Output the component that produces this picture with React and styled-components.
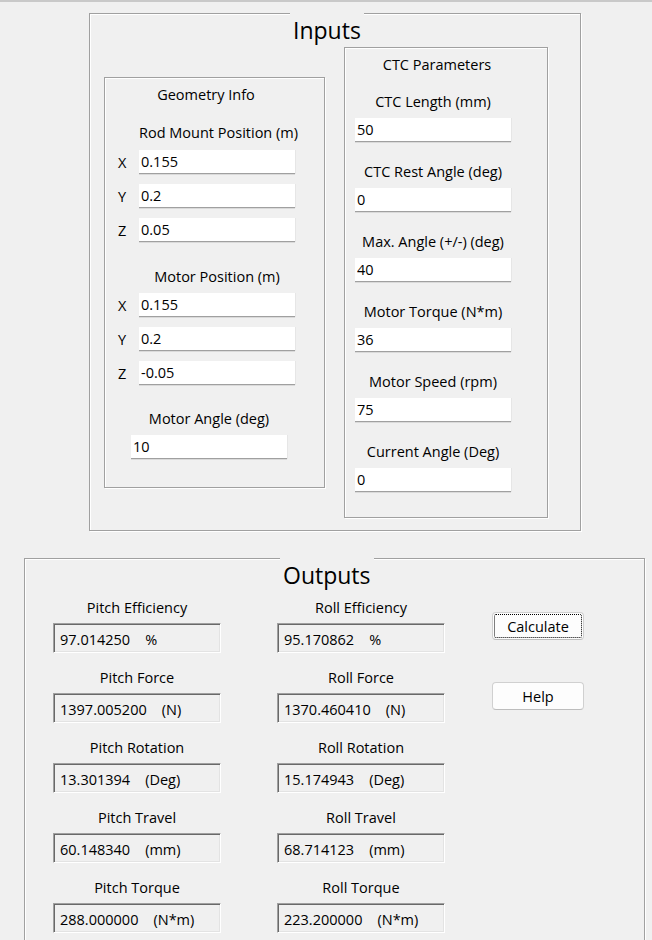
import styled, { createGlobalStyle } from 'styled-components';

const GlobalStyle = createGlobalStyle`
  html, body {
    margin: 0;
    padding: 0;
    background: #f0f0f0;
    overflow: hidden;
  }
  body {
    font-family: "Segoe UI", "Open Sans", "Noto Sans", sans-serif;
    font-size: 14.5px;
    color: #000;
  }
  * { box-sizing: border-box; }
`;

const Window = styled.div`
  border-top: 2px solid #c9c9c9;
  padding: 11px 0 0 24px;
  height: 940px;
  display: flex;
  flex-direction: column;
  align-items: flex-start;
`;

// etched frame like a WinForms GroupBox
const Group = styled.div`
  position: relative;
  flex-shrink: 0;
  border: 1px solid #a0a0a0;
  box-shadow: inset 1px 1px 0 #fff, 1px 1px 0 #fff;
`;

const InputsGroup = styled(Group)`
  margin-left: 65px;
  width: 492px;
  height: 518px;
  padding: 33px 0 0 14px;
  display: flex;
  align-items: flex-start;
  gap: 19px;
`;

const OutputsGroup = styled(Group)`
  margin-top: 27px;
  width: 621px;
  height: 420px;
  padding: 39px 0 0 28px;
  display: flex;
  align-items: flex-start;
`;

const GroupTitle = styled.div`
  position: absolute;
  top: -1px;
  left: ${p => p.left}px;
  padding: 0 3px;
  background: #f0f0f0;
  font-size: 23px;
  line-height: 34px;
`;

const SubGroup = styled(Group)`
  width: ${p => p.w}px;
  margin-top: ${p => p.top || 0}px;
  padding: 7px 0 ${p => p.bottom}px 0;
  display: flex;
  flex-direction: column;
  align-items: flex-start;
`;

const Caption = styled.div`
  width: 156px;
  line-height: 20px;
  text-align: center;
  white-space: nowrap;
  margin-left: ${p => p.indent || 0}px;
  margin-top: ${p => p.gap || 0}px;
`;

const TextBox = styled.input`
  width: 156px;
  height: 24px;
  margin: ${p => p.gap || 0}px 0 0 ${p => p.indent || 0}px;
  padding: 0 2px;
  border: none;
  border-bottom: 1px solid #a0a0a0;
  box-shadow: 0 1px 0 #dadada, 1px 0 0 #e6e6e6;
  background: #fff;
  font: inherit;
  color: #000;
  outline: none;
`;

const AxisRow = styled.div`
  display: flex;
  align-items: center;
  margin-top: ${p => p.gap}px;
`;

const Axis = styled.span`
  width: 34px;
  padding-left: 13px;
`;

const OutColumn = styled.div`
  width: 168px;
  margin-right: ${p => p.after}px;
  display: flex;
  flex-direction: column;
`;

const OutLabel = styled.div`
  line-height: 20px;
  text-align: center;
  margin-top: ${p => (p.first ? 0 : 15)}px;
`;

const ReadOut = styled.div`
  margin-top: 5px;
  height: 30px;
  padding: 2px 0 0 6px;
  display: flex;
  align-items: center;
  border-top: 1px solid #a0a0a0;
  border-left: 1px solid #a0a0a0;
  border-right: 1px solid #fff;
  border-bottom: 1px solid #fff;
  box-shadow: inset 1px 1px 0 #696969, inset -1px -1px 0 #e3e3e3;
  white-space: nowrap;
`;

const Unit = styled.span`
  margin-left: 15px;
`;

const ButtonColumn = styled.div`
  padding-top: 14px;
  display: flex;
  flex-direction: column;
  gap: 42px;
`;

const Button = styled.button`
  position: relative;
  width: 92px;
  height: 28px;
  border: 1px solid #d0d0d0;
  border-bottom-color: #bdbdbd;
  border-radius: 4px;
  background: #fdfdfd;
  font: inherit;
  color: #000;
  padding: 0;
  outline: ${p => (p.focused ? '1px dotted #000' : 'none')};
  outline-offset: -3px;
`;

const geoRows = [
  { axis: 'X', value: '0.155' },
  { axis: 'Y', value: '0.2' },
  { axis: 'Z', value: '0.05' },
];

const motorRows = [
  { axis: 'X', value: '0.155' },
  { axis: 'Y', value: '0.2' },
  { axis: 'Z', value: '-0.05' },
];

const ctcFields = [
  ['CTC Length (mm)', '50'],
  ['CTC Rest Angle (deg)', '0'],
  ['Max. Angle (+/-) (deg)', '40'],
  ['Motor Torque (N*m)', '36'],
  ['Motor Speed (rpm)', '75'],
  ['Current Angle (Deg)', '0'],
];

const pitch = [
  ['Pitch Efficiency', '97.014250', '%'],
  ['Pitch Force', '1397.005200', '(N)'],
  ['Pitch Rotation', '13.301394', '(Deg)'],
  ['Pitch Travel', '60.148340', '(mm)'],
  ['Pitch Torque', '288.000000', '(N*m)'],
];

const roll = [
  ['Roll Efficiency', '95.170862', '%'],
  ['Roll Force', '1370.460410', '(N)'],
  ['Roll Rotation', '15.174943', '(Deg)'],
  ['Roll Travel', '68.714123', '(mm)'],
  ['Roll Torque', '223.200000', '(N*m)'],
];

function AxisInputs({ rows, firstGap }) {
  return rows.map((r, i) => (
    <AxisRow key={r.axis} gap={i === 0 ? firstGap : 10}>
      <Axis>{r.axis}</Axis>
      <TextBox defaultValue={r.value} />
    </AxisRow>
  ));
}

function OutputList({ items, after }) {
  return (
    <OutColumn after={after}>
      {items.map(([label, value, unit], i) => (
        <div key={label}>
          <OutLabel first={i === 0}>{label}</OutLabel>
          <ReadOut>
            {value}
            <Unit>{unit}</Unit>
          </ReadOut>
        </div>
      ))}
    </OutColumn>
  );
}

export default function App() {
  return (
    <>
      <GlobalStyle />
      <Window>
        <InputsGroup>
          <GroupTitle left={200}>Inputs</GroupTitle>

          <SubGroup w={221} top={30} bottom={28}>
            <Caption indent={23}>Geometry Info</Caption>
            <Caption indent={34} gap={18}>Rod Mount Position (m)</Caption>
            <AxisInputs rows={geoRows} firstGap={7} />
            <Caption indent={34} gap={25}>Motor Position (m)</Caption>
            <AxisInputs rows={motorRows} firstGap={6} />
            <Caption indent={26} gap={24}>Motor Angle (deg)</Caption>
            <TextBox indent={26} gap={6} defaultValue="10" />
          </SubGroup>

          <SubGroup w={204} bottom={25}>
            <Caption indent={14}>CTC Parameters</Caption>
            {ctcFields.map(([label, value], i) => (
              <div key={label}>
                <Caption indent={10} gap={i === 0 ? 17 : 20}>{label}</Caption>
                <TextBox indent={10} gap={6} defaultValue={value} />
              </div>
            ))}
          </SubGroup>
        </InputsGroup>

        <OutputsGroup>
          <GroupTitle left={255}>Outputs</GroupTitle>
          <OutputList items={pitch} after={56} />
          <OutputList items={roll} after={47} />
          <ButtonColumn>
            <Button focused>Calculate</Button>
            <Button>Help</Button>
          </ButtonColumn>
        </OutputsGroup>
      </Window>
    </>
  );
}
